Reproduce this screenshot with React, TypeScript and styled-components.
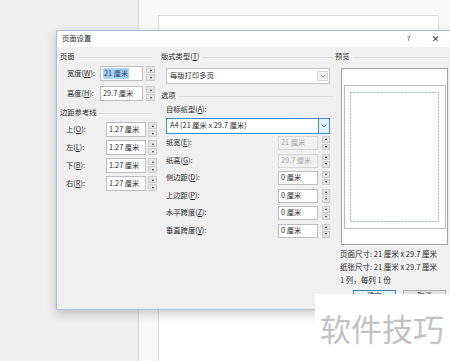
import React from "react";
import styled, { createGlobalStyle } from "styled-components";

const GlobalStyle = createGlobalStyle`
  html, body {
    margin: 0;
    padding: 0;
  }
  body {
    font-family: "Noto Sans CJK SC", "Noto Sans", sans-serif;
  }
`;

const Screen = styled.div`
  position: relative;
  width: 450px;
  height: 361px;
  overflow: hidden;
  display: flex;
  background: #efefef;
`;

const Gutter = styled.div`
  width: 138px;
  flex: none;
  background: #efefef;
  border-right: 1px solid #d9d9d9;
`;

const Workspace = styled.div`
  flex: 1;
  display: flex;
  padding: 15px 11px 0 19px;
  background: #f9f9f9;
`;

const Sheet = styled.div`
  flex: 1;
  background: #fff;
  border: 1px solid #dcdcdc;
  border-bottom: none;
`;

/* 对话框 */
const Dialog = styled.div`
  position: absolute;
  left: 56px;
  top: 30px;
  width: 400px;
  height: 280px;
  box-sizing: border-box;
  border: 1px solid #a9c0d8;
  background: #f0f0f0;
  box-shadow: 0 4px 10px rgba(0, 0, 0, 0.2);
  display: flex;
  flex-direction: column;
  font-size: 7.3px;
  line-height: 1;
  color: #2a2a2a;
`;

const TitleBar = styled.div`
  height: 16px;
  flex: none;
  display: flex;
  align-items: center;
  padding-left: 5px;
  padding-right: 6px;
  background: #fff;
`;

const TitleButton = styled.div<{ $first?: boolean }>`
  width: 27px;
  text-align: center;
  font-family: "DejaVu Sans", sans-serif;
  font-size: ${p => (p.$first ? "7px" : "9px")};
  color: #333;
  margin-left: ${p => (p.$first ? "auto" : "0")};
`;

const Body = styled.div`
  flex: 1;
  display: grid;
  grid-template-columns: 92px 172px 1fr;
  column-gap: 9px;
  align-items: start;
  padding: 4px 0 0 3px;
`;

const Column = styled.div`
  display: flex;
  flex-direction: column;
`;

const RightColumn = styled(Column)`
  margin-left: -7px;
`;

const GroupHead = styled.div<{ $top?: number }>`
  display: flex;
  align-items: center;
  gap: 3px;
  height: 12px;
  margin-top: ${p => p.$top ?? 0}px;
  white-space: nowrap;
  &::after {
    content: "";
    flex: 1;
    height: 1px;
    background: #dcdcdc;
  }
`;

const Row = styled.div<{ $top: number; $indent: number; $cols: string; $h: number }>`
  display: grid;
  grid-template-columns: ${p => p.$cols};
  align-items: center;
  height: ${p => p.$h}px;
  margin-top: ${p => p.$top}px;
  padding-left: ${p => p.$indent}px;
  white-space: nowrap;
`;

const Field = styled.div<{ $disabled?: boolean }>`
  box-sizing: border-box;
  height: 100%;
  display: flex;
  align-items: center;
  padding-left: 2px;
  border: 1px solid ${p => (p.$disabled ? "#d6d6d6" : "#bdbdbd")};
  background: ${p => (p.$disabled ? "#f0f0f0" : "#fff")};
  color: ${p => (p.$disabled ? "#a8a8a8" : "#2a2a2a")};
  white-space: nowrap;
`;

const Selected = styled.span`
  background: #a9d1f3;
  color: #1b3d6e;
  padding: 2px 1px;
`;

const SpinCell = styled.div<{ $gap: number }>`
  height: 100%;
  padding-left: ${p => p.$gap}px;
`;

const Spinner = styled.div`
  height: 100%;
  display: flex;
  flex-direction: column;
  gap: 1px;
`;

const SpinHalf = styled.div<{ $down?: boolean }>`
  flex: 1;
  box-sizing: border-box;
  background: #e4e4e4;
  border: 1px solid #cdcdcd;
  display: flex;
  align-items: center;
  justify-content: center;
  &::before {
    content: "";
    border-left: 1.5px solid transparent;
    border-right: 1.5px solid transparent;
    ${p => (p.$down ? "border-top: 2px solid #333;" : "border-bottom: 2px solid #333;")}
  }
`;

const SubLabel = styled.div`
  height: 10px;
  display: flex;
  align-items: center;
  margin-top: 3px;
  padding-left: 5px;
`;

const Select = styled.div<{ $top: number; $focus?: boolean }>`
  box-sizing: border-box;
  height: 16px;
  margin: ${p => p.$top}px 3px 0 5px;
  display: flex;
  align-items: center;
  padding-left: 3px;
  background: #fff;
  border: 1px solid ${p => (p.$focus ? "#3f8bd0" : "#c6c6c6")};
  white-space: nowrap;
`;

const SelectArrow = styled.div<{ $focus?: boolean }>`
  margin-left: auto;
  width: 11px;
  align-self: stretch;
  box-sizing: border-box;
  display: flex;
  align-items: center;
  justify-content: center;
  background: ${p => (p.$focus ? "#e3f0fb" : "#f4f4f4")};
  border-left: 1px solid ${p => (p.$focus ? "#3f8bd0" : "#d8d8d8")};
  ${p => (p.$focus ? "" : "margin: 2px 1px 2px auto; border: 1px solid #d8d8d8;")}
`;

const PreviewBox = styled.div`
  box-sizing: border-box;
  margin: 5px 0 0 6px;
  width: 107px;
  height: 177px;
  background: #fff;
  border: 1px solid #a3a3a3;
  display: flex;
`;

const Info = styled.div<{ $top?: number }>`
  height: 13px;
  display: flex;
  align-items: center;
  margin-top: ${p => p.$top ?? 0}px;
  padding-left: 5px;
  white-space: nowrap;
  font-size: 7.5px;
`;

const ButtonRow = styled.div`
  display: flex;
  gap: 7px;
  margin-top: 3.5px;
  padding-left: 18px;
`;

const Button = styled.div<{ $primary?: boolean }>`
  box-sizing: border-box;
  width: 43px;
  height: 13px;
  display: flex;
  align-items: center;
  justify-content: center;
  border: 1px solid ${p => (p.$primary ? "#3c7fb1" : "#adadad")};
  background: ${p => (p.$primary ? "#e5f1fb" : "#e1e1e1")};
`;

const Watermark = styled.div`
  position: absolute;
  left: 315px;
  top: 294px;
  width: 135px;
  height: 67px;
  box-sizing: border-box;
  padding-left: 5px;
  display: flex;
  align-items: center;
  background: #fff;
  color: #c2c2c2;
  font-size: 31px;
  white-space: nowrap;
`;

const Key = ({ text, k, colon = true }: { text: string; k: string; colon?: boolean }) => (
  <span>
    {text}(<u>{k}</u>){colon ? ":" : ""}
  </span>
);

const Spin = ({ gap }: { gap: number }) => (
  <SpinCell $gap={gap}>
    <Spinner>
      <SpinHalf />
      <SpinHalf $down />
    </Spinner>
  </SpinCell>
);

const Chevron = ({ color }: { color: string }) => (
  <svg width="6" height="4" viewBox="0 0 6 4">
    <path d="M0.5 0.5 L3 3 L5.5 0.5" fill="none" stroke={color} strokeWidth="0.9" />
  </svg>
);

const SIZE_COLS = "33px 43px 12px";
const MARGIN_COLS = "40px 40px 11px";
const OPT_COLS = "112px 40px 12px";

const margins = [
  { label: "上", k: "O" },
  { label: "左", k: "L" },
  { label: "下", k: "B" },
  { label: "右", k: "R" },
];

const options = [
  { label: "纸宽", k: "E", value: "21 厘米", disabled: true },
  { label: "纸高", k: "G", value: "29.7 厘米", disabled: true },
  { label: "侧边距", k: "D", value: "0 厘米" },
  { label: "上边距", k: "P", value: "0 厘米" },
  { label: "水平跨度", k: "Z", value: "0 厘米" },
  { label: "垂直跨度", k: "V", value: "0 厘米" },
];

export default function App() {
  return (
    <>
      <GlobalStyle />
      <Screen>
        <Gutter />
        <Workspace>
          <Sheet />
        </Workspace>

        <Dialog>
          <TitleBar>
            <span>页面设置</span>
            <TitleButton $first>?</TitleButton>
            <TitleButton>✕</TitleButton>
          </TitleBar>
          <Body>
            <Column>
              <GroupHead>页面</GroupHead>
              <Row $top={3} $indent={7} $cols={SIZE_COLS} $h={15}>
                <Key text="宽度" k="W" />
                <Field>
                  <Selected>21 厘米</Selected>
                </Field>
                <Spin gap={3} />
              </Row>
              <Row $top={5} $indent={7} $cols={SIZE_COLS} $h={15}>
                <Key text="高度" k="H" />
                <Field>29.7 厘米</Field>
                <Spin gap={3} />
              </Row>
              <GroupHead $top={6}>边距参考线</GroupHead>
              {margins.map(m => (
                <Row key={m.k} $top={3} $indent={6} $cols={MARGIN_COLS} $h={15}>
                  <Key text={m.label} k={m.k} />
                  <Field>1.27 厘米</Field>
                  <Spin gap={2} />
                </Row>
              ))}
            </Column>

            <Column>
              <GroupHead>
                <Key text="版式类型" k="T" colon={false} />
              </GroupHead>
              <Select $top={5}>
                每版打印多页
                <SelectArrow>
                  <Chevron color="#777" />
                </SelectArrow>
              </Select>
              <GroupHead $top={6}>选项</GroupHead>
              <SubLabel>
                <Key text="目标纸型" k="A" />
              </SubLabel>
              <Select $top={3} $focus>
                A4 (21 厘米 x 29.7 厘米)
                <SelectArrow $focus>
                  <Chevron color="#2b5f91" />
                </SelectArrow>
              </Select>
              {options.map((o, i) => (
                <Row key={o.k} $top={i === 0 ? 2 : 3.5} $indent={5} $cols={OPT_COLS} $h={14}>
                  <Key text={o.label} k={o.k} />
                  <Field $disabled={o.disabled}>{o.value}</Field>
                  <Spin gap={4} />
                </Row>
              ))}
            </Column>

            <RightColumn>
              <GroupHead>预览</GroupHead>
              <PreviewBox>
                <svg width="105" height="175" viewBox="0 0 105 175">
                  <rect x="2.5" y="16.5" width="101" height="143" fill="#fff" stroke="#bdbdbd" strokeWidth="1" />
                  <rect
                    x="8.5"
                    y="23.5"
                    width="88"
                    height="129"
                    fill="none"
                    stroke="#93bcb7"
                    strokeWidth="1"
                    strokeDasharray="2 1"
                  />
                </svg>
              </PreviewBox>
              <Info $top={2}>页面尺寸: 21 厘米 x 29.7 厘米</Info>
              <Info>纸张尺寸: 21 厘米 x 29.7 厘米</Info>
              <Info>1 列，每列 1 份</Info>
              <ButtonRow>
                <Button $primary>确定</Button>
                <Button>取消</Button>
              </ButtonRow>
            </RightColumn>
          </Body>
        </Dialog>

        <Watermark>软件技巧</Watermark>
      </Screen>
    </>
  );
}
